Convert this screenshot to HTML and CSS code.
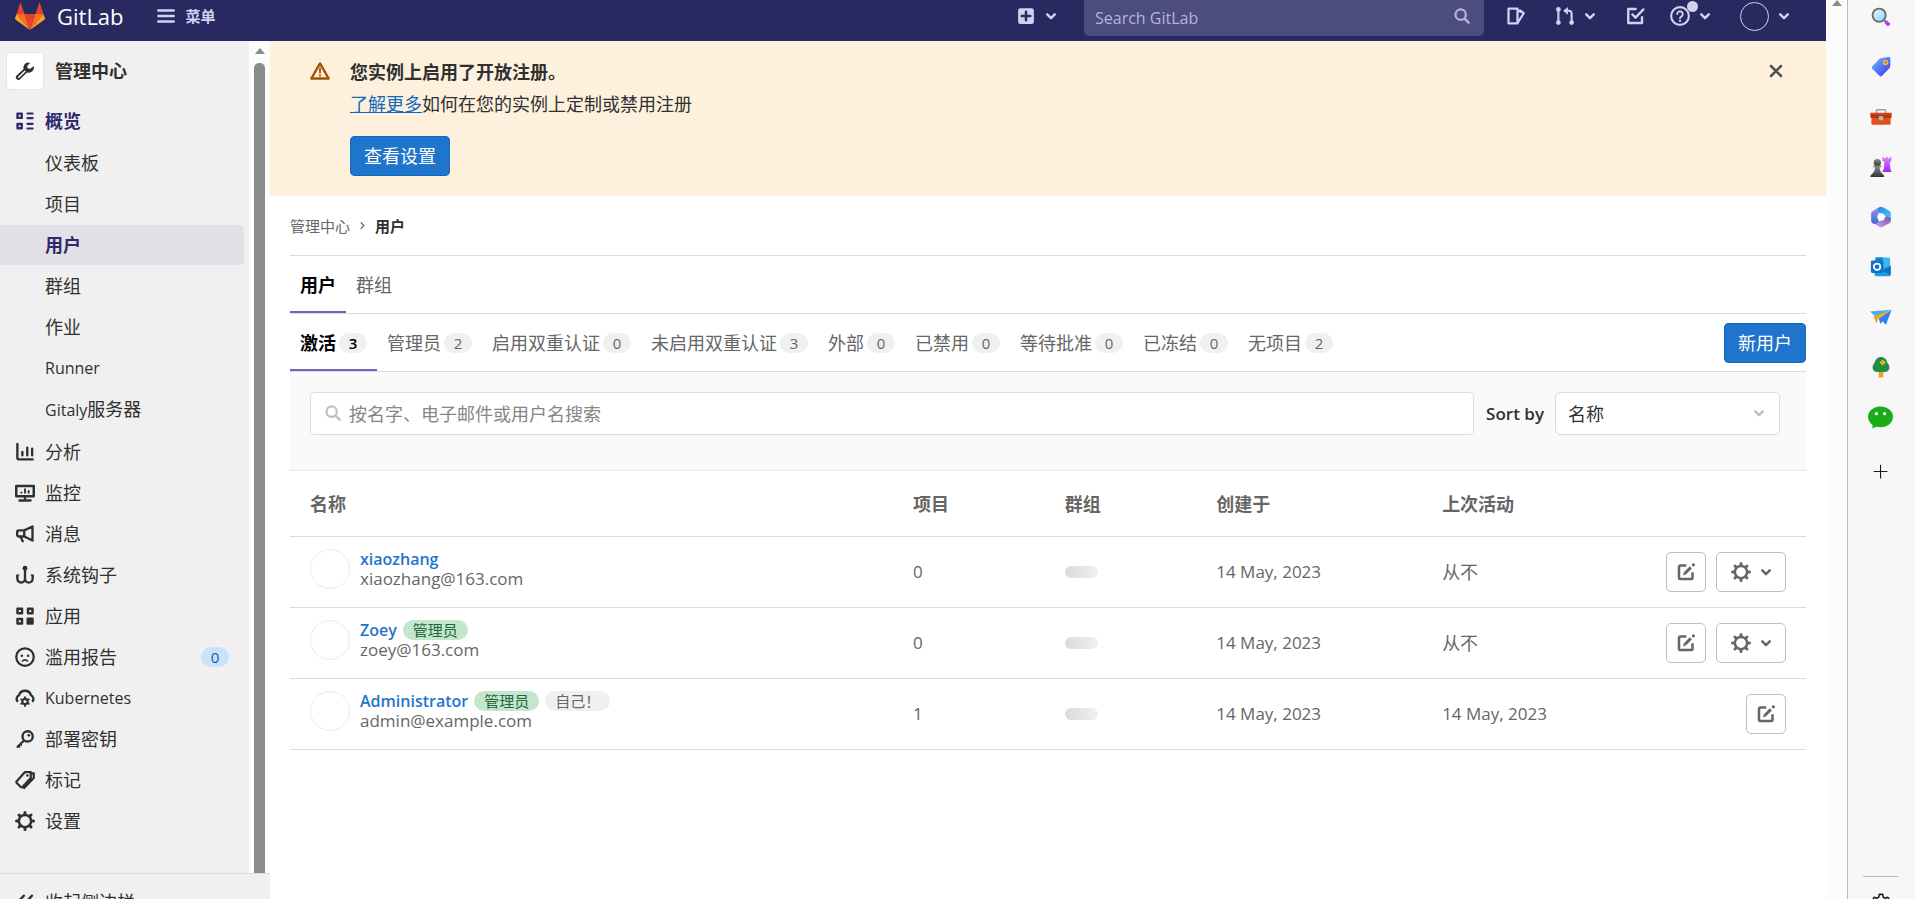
FILE: index.html
```html
<!DOCTYPE html>
<html lang="zh-CN">
<head>
<meta charset="utf-8">
<title>用户 · 管理中心 · GitLab</title>
<link rel="stylesheet" href="styles.css">
</head>
<body>
<svg class="defs" aria-hidden="true">
  <defs>
    <symbol id="i-chevron" viewBox="0 0 16 16"><path d="M5 6.7l3 3 3-3" fill="none" stroke="currentColor" stroke-width="2" stroke-linecap="round" stroke-linejoin="round"/></symbol>
    <symbol id="i-chevron-right" viewBox="0 0 16 16"><path d="M6.2 4.5L9.7 8l-3.5 3.5" fill="none" stroke="currentColor" stroke-width="1.6" stroke-linecap="round" stroke-linejoin="round"/></symbol>
    <symbol id="i-search" viewBox="0 0 16 16"><circle cx="6.8" cy="6.8" r="4.6" fill="none" stroke="currentColor" stroke-width="2"/><path d="M10.3 10.3l3.6 3.6" stroke="currentColor" stroke-width="2.2" stroke-linecap="round"/></symbol>
    <symbol id="i-gear" viewBox="0 0 16 16"><circle cx="8" cy="8" r="4.9" fill="none" stroke="currentColor" stroke-width="2"/><path d="M8 1.2v1.4M8 13.4v1.4M1.2 8h1.4M13.4 8h1.4M3.2 3.2l1 1M11.8 11.8l1 1M3.2 12.8l1-1M11.8 4.2l1-1" stroke="currentColor" stroke-width="2.4" stroke-linecap="round"/></symbol>
    <symbol id="i-edit" viewBox="0 0 16 16"><path d="M8.2 2.8H3.4a1 1 0 0 0-1 1v8.8a1 1 0 0 0 1 1h8.8a1 1 0 0 0 1-1V8.2" fill="none" stroke="currentColor" stroke-width="2"/><path d="M7 9.2l4.9-4.9" stroke="currentColor" stroke-width="2.4"/><path d="M5.6 10.6l.5-2.2 1.7 1.7z" fill="currentColor"/><circle cx="13.9" cy="2.2" r="1.3" fill="currentColor"/></symbol>
    <symbol id="i-wrench" viewBox="0 0 16 16"><path d="M10.2 1.2a4 4 0 0 0-3.3 5.1L1.3 11.6a1.9 1.9 0 0 0 2.8 2.9l5.5-5.4A4.1 4.1 0 0 0 14.9 4l-2.6 2.2-2-.3-.6-2 2.4-2.4a4 4 0 0 0-1.9-.3z" fill="#303030"/><path d="M3 13l4.900-4.800" stroke="#fff" stroke-width="1.200" stroke-linecap="round"/></symbol>
    <symbol id="i-overview" viewBox="0 0 16 16"><path d="M2 2.100h3.400v3.400H2zM2 10.400h3.400v3.400H2z" fill="none" stroke="currentColor" stroke-width="1.900" stroke-linejoin="round"/><path d="M10 2h4.100M10 5.700h4.100M10 10.300h4.100M10 14h4.100" stroke="currentColor" stroke-width="1.700" stroke-linecap="round"/></symbol>
    <symbol id="i-chart" viewBox="0 0 16 16"><path d="M1.900 1.600v11.300a1 1 0 0 0 1 1h11.200M5.900 8v2.600M9.800 4.600v6M13.700 5.400v5.200" fill="none" stroke="currentColor" stroke-width="1.900" stroke-linecap="round"/></symbol>
    <symbol id="i-monitor" viewBox="0 0 16 16"><path d="M1 2.400h14v8.200H1z" fill="none" stroke="currentColor" stroke-width="2" stroke-linejoin="round"/><path d="M8 11v2.600M3.600 14h8.800" stroke="currentColor" stroke-width="1.900" stroke-linecap="round"/><path d="M5.100 7.500v.3M8 5v2.800M10.900 6.300v1.500" stroke="currentColor" stroke-width="1.500" stroke-linecap="round"/></symbol>
    <symbol id="i-horn" viewBox="0 0 16 16"><path d="M7.400 5.100L14 2v11.200L7.400 10H3.200a1.500 1.500 0 0 1-1.500-1.500V6.600a1.500 1.500 0 0 1 1.500-1.500zM7.400 5.100V10M4.300 10l1.900 3.800" fill="none" stroke="currentColor" stroke-width="1.900" stroke-linejoin="round" stroke-linecap="round"/></symbol>
    <symbol id="i-hook" viewBox="0 0 16 16"><circle cx="8" cy="2.500" r="1.900" fill="currentColor"/><path d="M8 3v8.500M8 11a3 3 0 0 1-6.100 0V8.800M8 11a3 3 0 0 0 6.100 0V8.800" fill="none" stroke="currentColor" stroke-width="1.900" stroke-linecap="round"/><path d="M1 10.200V7.600h3zM15 10.200V7.600h-3z" fill="currentColor"/></symbol>
    <symbol id="i-apps" viewBox="0 0 16 16"><path d="M2 2.100h3.600v3.600H2zM10.400 2.100H14v3.600h-3.600zM2 10.400h3.600V14H2z" fill="none" stroke="currentColor" stroke-width="2" stroke-linejoin="round"/><rect x="9.200" y="9.200" width="5.800" height="5.800" rx="1" fill="currentColor"/></symbol>
    <symbol id="i-sad" viewBox="0 0 16 16"><circle cx="8" cy="8" r="7" fill="none" stroke="currentColor" stroke-width="1.800"/><circle cx="5.500" cy="7" r="1" fill="currentColor"/><circle cx="10.500" cy="7" r="1" fill="currentColor"/><path d="M6 11.300c.8-1.300 3.200-1.300 4 0" fill="none" stroke="currentColor" stroke-width="1.300" stroke-linecap="round"/></symbol>
    <symbol id="i-cloud" viewBox="0 0 16 16"><path d="M1.800 10.400A3.200 3.200 0 0 1 3.200 5.800a5 5 0 0 1 9.600 0 3.200 3.200 0 0 1 1.400 4.600" fill="none" stroke="currentColor" stroke-width="1.900" stroke-linecap="round"/><circle cx="8" cy="10.800" r="2.100" fill="none" stroke="currentColor" stroke-width="1.700"/><path d="M8 7.400v1M8 13.400v1M4.900 9.100l.9.500M10.200 12.100l.9.500M4.900 12.600l.9-.5M10.200 9.600l.9-.5" stroke="currentColor" stroke-width="1.500" stroke-linecap="round"/></symbol>
    <symbol id="i-key" viewBox="0 0 16 16"><circle cx="10.100" cy="5.900" r="4.100" fill="none" stroke="currentColor" stroke-width="1.900"/><circle cx="11" cy="5" r="1.100" fill="currentColor"/><path d="M7 8.200l-5.800 5.600V15h2.900v-1.600h1.500v-1.700l2.600-2z" fill="currentColor"/></symbol>
    <symbol id="i-tag" viewBox="0 0 16 16"><path d="M1.400 9L8 1.600h4.600v4.800L6 13.600a1 1 0 0 1-1.400 0L1.400 10.400a1 1 0 0 1 0-1.400zM6.700 15l8.300-8.600V2.600h-2" fill="none" stroke="currentColor" stroke-width="1.800" stroke-linejoin="round"/><circle cx="9.900" cy="4.400" r="1" fill="currentColor"/></symbol>
    <symbol id="i-collapse" viewBox="0 0 16 16"><path d="M7 3L2.500 8 7 13M13.500 3L9 8l4.500 5" fill="none" stroke="currentColor" stroke-width="2" stroke-linecap="round"/></symbol>
    <symbol id="i-warning" viewBox="0 0 16 16"><path d="M8 1.900L14.900 14H1.100z" fill="none" stroke="currentColor" stroke-width="1.900" stroke-linejoin="round"/><path d="M8 6v3.200" stroke="currentColor" stroke-width="1.500" stroke-linecap="round"/><circle cx="8" cy="11.500" r=".9" fill="currentColor"/></symbol>
    <symbol id="i-close" viewBox="0 0 16 16"><path d="M4 4l8 8M12 4l-8 8" stroke="currentColor" stroke-width="2" stroke-linecap="round"/></symbol>
  </defs>
</svg>

<div class="window">
  <div class="page">
    <header class="topbar">
      <a class="brand" href="#">
        <svg class="tanuki" viewBox="0 0 30 28" aria-hidden="true">
          <path d="M5.500 0L1.600 12h7.900zM24.500 0L20.500 12h7.900zM9.500 12h11L15 28z" fill="#e24329"/>
          <path d="M1.600 12h7.900L15 28zM28.400 12h-7.900L15 28z" fill="#fc6d26"/>
          <path d="M1.600 12L0 16.200q-.2 1 .7 1.600L15 28zM28.400 12l1.600 4.200q.2 1-.7 1.600L15 28z" fill="#fca326"/>
        </svg>
        <span class="wordmark">GitLab</span>
      </a>
      <button class="bar-btn menu-btn" type="button">
        <svg class="ico" viewBox="0 0 16 16" aria-hidden="true"><path d="M1.800 3.600h12.400M1.800 8h12.400M1.800 12.400h12.400" stroke="currentColor" stroke-width="1.900" stroke-linecap="round"/></svg>
        菜单
      </button>
      <button class="bar-btn new-btn" type="button" aria-label="新建">
        <svg class="ico" viewBox="0 0 16 16" aria-hidden="true"><rect x="1.700" y="1.700" width="12.600" height="12.600" rx="1.800" fill="currentColor"/><path d="M8 4.600v6.800M4.600 8h6.800" stroke="#292961" stroke-width="2" stroke-linecap="round"/></svg>
        <svg class="ico" aria-hidden="true"><use href="#i-chevron"/></svg>
      </button>
      <label class="top-search">
        <input type="search" placeholder="Search GitLab" aria-label="Search GitLab">
        <svg class="ico" aria-hidden="true"><use href="#i-search"/></svg>
      </label>
      <nav class="bar-links">
        <a class="bar-btn issues-btn" href="#" aria-label="议题"><svg class="ico" viewBox="0 0 16 16" aria-hidden="true"><path d="M2 2.100h7.200v11.800H2zM9.200 3.200l2.400 1.400M9.500 13.200l4.700-7.400-3-2.300" fill="none" stroke="currentColor" stroke-width="1.800" stroke-linejoin="round" stroke-linecap="round"/></svg></a>
        <button class="bar-btn" type="button" aria-label="合并请求"><svg class="ico" viewBox="0 0 16 16" aria-hidden="true"><path d="M2.700 3v10M7.500 3.800h3.400a2.400 2.400 0 0 1 2.400 2.400V13" fill="none" stroke="currentColor" stroke-width="1.700"/><circle cx="2.700" cy="2.700" r="1.900" fill="currentColor"/><circle cx="2.700" cy="13.200" r="1.900" fill="currentColor"/><circle cx="13.300" cy="13.200" r="1.900" fill="currentColor"/><path d="M10.300.7v6.200L6.600 3.800z" fill="currentColor"/></svg><svg class="ico" aria-hidden="true"><use href="#i-chevron"/></svg></button>
        <a class="bar-btn" href="#" aria-label="待办事项"><svg class="ico" viewBox="0 0 16 16" aria-hidden="true"><path d="M8.500 2.400H2.600v11.200h11V9" fill="none" stroke="currentColor" stroke-width="1.900" stroke-linejoin="round" stroke-linecap="round"/><path d="M6 6.800l2.400 2.500 6.200-6.500" fill="none" stroke="currentColor" stroke-width="2" stroke-linejoin="round" stroke-linecap="round"/></svg></a>
        <button class="bar-btn help-btn" type="button" aria-label="帮助"><svg class="ico" viewBox="0 0 16 16" aria-hidden="true"><circle cx="8" cy="8" r="7.100" fill="none" stroke="currentColor" stroke-width="1.700"/><path d="M5.800 6.500a2.200 2.200 0 1 1 3.400 1.800C8.400 8.800 8 9 8 9.800" fill="none" stroke="currentColor" stroke-width="1.500" stroke-linecap="round"/><circle cx="8" cy="11.900" r=".9" fill="currentColor"/></svg><svg class="ico" aria-hidden="true"><use href="#i-chevron"/></svg><span class="help-dot"></span></button>
        <button class="bar-btn" type="button" aria-label="用户菜单"><span class="top-avatar"></span><svg class="ico" aria-hidden="true"><use href="#i-chevron"/></svg></button>
      </nav>
    </header>

    <div class="body">
      <aside class="sidebar">
        <div class="side-scroll">
          <nav class="side-nav" aria-label="管理中心">
            <a class="side-title" href="#"><span class="side-badge"><svg class="ico" aria-hidden="true"><use href="#i-wrench"/></svg></span>管理中心</a>
            <ul class="side-list">
              <li><a class="side-link current" href="#"><svg class="ico" aria-hidden="true"><use href="#i-overview"/></svg>概览</a>
                <ul class="side-sub">
                  <li><a class="side-link" href="#">仪表板</a></li>
                  <li><a class="side-link" href="#">项目</a></li>
                  <li><a class="side-link current selected" href="#">用户</a></li>
                  <li><a class="side-link" href="#">群组</a></li>
                  <li><a class="side-link" href="#">作业</a></li>
                  <li><a class="side-link latin" href="#">Runner</a></li>
                  <li><a class="side-link" href="#"><span><span class="latin">Gitaly</span>服务器</span></a></li>
                </ul>
              </li>
              <li><a class="side-link" href="#"><svg class="ico" aria-hidden="true"><use href="#i-chart"/></svg>分析</a></li>
              <li><a class="side-link" href="#"><svg class="ico" aria-hidden="true"><use href="#i-monitor"/></svg>监控</a></li>
              <li><a class="side-link" href="#"><svg class="ico" aria-hidden="true"><use href="#i-horn"/></svg>消息</a></li>
              <li><a class="side-link" href="#"><svg class="ico" aria-hidden="true"><use href="#i-hook"/></svg>系统钩子</a></li>
              <li><a class="side-link" href="#"><svg class="ico" aria-hidden="true"><use href="#i-apps"/></svg>应用</a></li>
              <li><a class="side-link" href="#"><svg class="ico" aria-hidden="true"><use href="#i-sad"/></svg>滥用报告<span class="badge info">0</span></a></li>
              <li><a class="side-link latin" href="#"><svg class="ico" aria-hidden="true"><use href="#i-cloud"/></svg>Kubernetes</a></li>
              <li><a class="side-link" href="#"><svg class="ico" aria-hidden="true"><use href="#i-key"/></svg>部署密钥</a></li>
              <li><a class="side-link" href="#"><svg class="ico" aria-hidden="true"><use href="#i-tag"/></svg>标记</a></li>
              <li><a class="side-link" href="#"><svg class="ico" aria-hidden="true"><use href="#i-gear"/></svg>设置</a></li>
            </ul>
          </nav>
          <div class="scrollbar side-bar"><span class="arrow-up"></span><span class="thumb"></span></div>
        </div>
        <div class="side-foot"><button class="collapse" type="button"><svg class="ico" aria-hidden="true"><use href="#i-collapse"/></svg>收起侧边栏</button></div>
      </aside>

      <main class="main">
        <section class="banner">
          <svg class="ico banner-ico" aria-hidden="true"><use href="#i-warning"/></svg>
          <div class="banner-body">
            <h2>您实例上启用了开放注册。</h2>
            <p><a href="#">了解更多</a>如何在您的实例上定制或禁用注册</p>
            <button class="btn primary" type="button">查看设置</button>
          </div>
          <button class="close" type="button" aria-label="关闭"><svg class="ico" aria-hidden="true"><use href="#i-close"/></svg></button>
        </section>

        <div class="content">
          <nav class="crumbs" aria-label="面包屑"><a href="#">管理中心</a><svg class="sep" aria-hidden="true"><use href="#i-chevron-right"/></svg><a class="here" href="#">用户</a></nav>
          <nav class="tabs"><a class="tab active" href="#">用户</a><a class="tab" href="#">群组</a></nav>
          <div class="tabs">
            <a class="tab active" href="#">激活<span class="badge">3</span></a>
            <a class="tab" href="#">管理员<span class="badge">2</span></a>
            <a class="tab" href="#">启用双重认证<span class="badge">0</span></a>
            <a class="tab" href="#">未启用双重认证<span class="badge">3</span></a>
            <a class="tab" href="#">外部<span class="badge">0</span></a>
            <a class="tab" href="#">已禁用<span class="badge">0</span></a>
            <a class="tab" href="#">等待批准<span class="badge">0</span></a>
            <a class="tab" href="#">已冻结<span class="badge">0</span></a>
            <a class="tab" href="#">无项目<span class="badge">2</span></a>
            <button class="btn primary new-user" type="button">新用户</button>
          </div>

          <form class="filter">
            <label class="filter-search"><svg class="ico" aria-hidden="true"><use href="#i-search"/></svg><input type="search" placeholder="按名字、电子邮件或用户名搜索" aria-label="搜索用户"></label>
            <label class="sort-label" for="sort">Sort by</label>
            <span class="select"><select id="sort"><option>名称</option></select><svg class="ico" aria-hidden="true"><use href="#i-chevron"/></svg></span>
          </form>

          <table class="users">
            <colgroup><col><col class="c-num"><col class="c-num"><col class="c-date"><col class="c-date"><col class="c-act"></colgroup>
            <thead><tr><th>名称</th><th>项目</th><th>群组</th><th>创建于</th><th>上次活动</th><th></th></tr></thead>
            <tbody>
              <tr>
                <td><div class="user"><span class="avatar"></span><div><div class="name"><a href="#">xiaozhang</a></div><div class="mail">xiaozhang@163.com</div></div></div></td>
                <td>0</td><td><span class="skeleton"></span></td><td>14 May, 2023</td><td class="cjk">从不</td>
                <td><div class="actions"><button class="icon-btn" type="button" aria-label="编辑"><svg class="ico" aria-hidden="true"><use href="#i-edit"/></svg></button><button class="icon-btn wide" type="button" aria-label="用户管理"><svg class="ico" aria-hidden="true"><use href="#i-gear"/></svg><svg class="ico" aria-hidden="true"><use href="#i-chevron"/></svg></button></div></td>
              </tr>
              <tr>
                <td><div class="user"><span class="avatar"></span><div><div class="name"><a href="#">Zoey</a><span class="badge success">管理员</span></div><div class="mail">zoey@163.com</div></div></div></td>
                <td>0</td><td><span class="skeleton"></span></td><td>14 May, 2023</td><td class="cjk">从不</td>
                <td><div class="actions"><button class="icon-btn" type="button" aria-label="编辑"><svg class="ico" aria-hidden="true"><use href="#i-edit"/></svg></button><button class="icon-btn wide" type="button" aria-label="用户管理"><svg class="ico" aria-hidden="true"><use href="#i-gear"/></svg><svg class="ico" aria-hidden="true"><use href="#i-chevron"/></svg></button></div></td>
              </tr>
              <tr>
                <td><div class="user"><span class="avatar"></span><div><div class="name"><a href="#">Administrator</a><span class="badge success">管理员</span><span class="badge">自己！</span></div><div class="mail">admin@example.com</div></div></div></td>
                <td>1</td><td><span class="skeleton"></span></td><td>14 May, 2023</td><td>14 May, 2023</td>
                <td><div class="actions"><button class="icon-btn" type="button" aria-label="编辑"><svg class="ico" aria-hidden="true"><use href="#i-edit"/></svg></button></div></td>
              </tr>
            </tbody>
          </table>
        </div>
      </main>
    </div>
  </div>

  <div class="scrollbar page-bar"><span class="arrow-up"></span></div>

  <aside class="dock" aria-label="浏览器侧栏">
    <svg class="app" viewBox="0 0 24 24" aria-hidden="true"><defs><linearGradient id="g1" x1="0" y1="0" x2="1" y2="1"><stop offset="0" stop-color="#e8f8ff"/><stop offset="1" stop-color="#8fd0f5"/></linearGradient></defs><path d="M15.500 15.500l2 2" stroke="#666" stroke-width="2"/><path d="M17 17l4 4" stroke="#c239f5" stroke-width="4"/><circle cx="10" cy="10" r="7.200" fill="url(#g1)" stroke="#6b6b6b" stroke-width="2"/></svg>
    <svg class="app" viewBox="0 0 24 24" aria-hidden="true"><defs><linearGradient id="g2" x1="0" y1="0" x2="1" y2="1"><stop offset="0" stop-color="#6cbcff"/><stop offset="1" stop-color="#3a35f2"/></linearGradient></defs><path d="M12 2.500l8-1.300a2 2 0 0 1 2.300 2L22 11.500a3 3 0 0 1-.8 1.800l-8 8.200a2 2 0 0 1-2.900 0L2.500 14a2 2 0 0 1 0-2.900l7.700-7.700a3 3 0 0 1 1.800-.9z" fill="url(#g2)"/><circle cx="17" cy="7" r="2.200" fill="#8a7bd8" stroke="#ffc20e" stroke-width="1.500"/></svg>
    <svg class="app" viewBox="0 0 24 24" aria-hidden="true"><path d="M7 8V5.500A1.500 1.500 0 0 1 8.500 4h7A1.500 1.500 0 0 1 17 5.500V8" fill="none" stroke="#9a9a9a" stroke-width="1.600"/><rect x="1.500" y="11" width="21" height="9.500" rx="1.500" fill="#e0511c"/><path d="M.5 7.500h23V13H.5z" fill="#b8330e"/><path d="M.5 7.500h23v1.800H.5z" fill="#d5481b"/><rect x="9.700" y="10.800" width="4.600" height="4.800" rx="1" fill="#a9b7c4"/></svg>
    <svg class="app" viewBox="0 0 24 24" aria-hidden="true"><defs><linearGradient id="g3" x1="0" y1="0" x2="0" y2="1"><stop offset="0" stop-color="#8d8d8d"/><stop offset="1" stop-color="#333"/></linearGradient><linearGradient id="g4" x1="0" y1="0" x2="0" y2="1"><stop offset="0" stop-color="#d88bff"/><stop offset="1" stop-color="#a31dfa"/></linearGradient></defs><path d="M13.500 1h2v1.500h2V1h2v1.500h2V1h2v4l-2 2 .8 7.500 1.200 3H13.500l1.500-3 .8-7.500-2.300-2z" fill="url(#g4)"/><circle cx="8" cy="7.300" r="4" fill="url(#g3)"/><path d="M3.500 10.500h9v1.800h-2c0 3 1 5.200 3.200 7.200 1.500 1 1.800 1.800 1.800 3.500H.5c0-1.700.3-2.500 1.800-3.500 2.200-2 3.200-4.200 3.200-7.200h-2z" fill="url(#g3)"/></svg>
    <svg class="app" viewBox="0 0 24 24" aria-hidden="true"><defs><linearGradient id="g5" x1="0" y1="0" x2="0" y2="1"><stop offset="0" stop-color="#a58ae6"/><stop offset="1" stop-color="#2f6fd6"/></linearGradient><linearGradient id="g6" x1="0" y1="0" x2="1" y2="1"><stop offset="0" stop-color="#2b7fe0"/><stop offset="1" stop-color="#45d0f2"/></linearGradient><linearGradient id="g7" x1="0" y1="1" x2="1" y2="0"><stop offset="0" stop-color="#d39af0"/><stop offset="1" stop-color="#7457a8"/></linearGradient></defs><path d="M8 2.500L3 5.500A3.500 3.500 0 0 0 1.200 8.500v7.500A3.500 3.500 0 0 0 3 19l3 1 3.500-2V7z" fill="url(#g5)"/><path d="M8 2.500l2-1.200a4 4 0 0 1 4 0l7 4a3.500 3.500 0 0 1 1.800 3v5L9 7z" fill="url(#g6)"/><path d="M22.800 13v2.500A3.500 3.500 0 0 1 21 18.700l-7 4a4 4 0 0 1-4 0l-4-2.700 12-9z" fill="url(#g7)"/><circle cx="12" cy="12" r="4" fill="#fff"/></svg>
    <svg class="app" viewBox="0 0 24 24" aria-hidden="true"><rect x="6" y="1.500" width="16" height="15" rx="1.500" fill="#35b9ef"/><path d="M6 1.500h8v6H6z" fill="#1487d4"/><path d="M22.500 10.500v10a1.500 1.500 0 0 1-1.500 1.500H6.500A1.500 1.500 0 0 1 5 20.500V13h9z" fill="#1b9be5"/><path d="M22.500 11v10L14 16z" fill="#0c6fb8"/><rect x="1" y="5" width="13.500" height="13.500" rx="1.500" fill="#0f70c9"/><circle cx="7.700" cy="11.700" r="3.500" fill="none" stroke="#fff" stroke-width="1.900"/></svg>
    <svg class="app" viewBox="0 0 24 24" aria-hidden="true"><path d="M0 6L23.500 4 6.500 12z" fill="#4aaef5"/><path d="M23.500 4L17.500 20.500l-4-4-2 3-2-6z" fill="#2c83ee"/><path d="M23.500 4L4 11.500l3 7.500 2-5.500z" fill="#f5a51d"/></svg>
    <svg class="app" viewBox="0 0 24 24" aria-hidden="true"><rect x="9.500" y="15" width="5" height="8.500" rx=".8" fill="#f3a01c"/><path d="M12 1c3.800 0 6.500 3 7 6.500 1.500 1.500 2.200 3.200 2.200 5 0 3-2.200 5-5.200 5H8c-3 0-5.200-2-5.200-5 0-1.800.7-3.500 2.200-5C5.500 4 8.200 1 12 1z" fill="#1f8f45"/><path d="M13.800 4l3.200 3.200-3.200 3.200-3.200-3.200z" fill="#ffc61a"/><circle cx="13.800" cy="7.200" r="1" fill="#d86b0a"/></svg>
    <svg class="app wide-app" viewBox="0 0 26 24" aria-hidden="true"><ellipse cx="13" cy="11.300" rx="13" ry="10.800" fill="#1aad19"/><path d="M5 18l-.5 5.500L11 20.500z" fill="#1aad19"/><circle cx="8.700" cy="8" r="1.700" fill="#fff"/><circle cx="17.300" cy="8" r="1.700" fill="#fff"/></svg>
    <svg class="app add" viewBox="0 0 24 24" aria-hidden="true"><path d="M11.500 4v15M4 11.500h15" stroke="#1b1b1b" stroke-width="1.200"/></svg>
    <div class="dock-foot"><svg class="app" viewBox="0 0 24 24" aria-hidden="true"><path d="M10.200 1.500h3.600l.6 3 2.200 1.200 2.900-1 1.800 3-2.300 2v2.600l2.300 2-1.800 3-2.900-1-2.200 1.200-.6 3h-3.600l-.6-3-2.200-1.200-2.900 1-1.800-3 2.300-2V9.700l-2.300-2 1.800-3 2.900 1 2.200-1.200z" fill="none" stroke="#1b1b1b" stroke-width="1.700" stroke-linejoin="round"/></svg></div>
  </aside>
</div>
</body>
</html>
```

FILE: styles.css
```css
* { box-sizing: border-box; }

body {
  margin: 0;
  overflow: hidden;
  background: #fff;
  color: #303030;
  font-family: "Open Sans", "Noto Sans CJK SC", sans-serif;
  font-size: 18px;
  line-height: 20px;
}

a { color: inherit; text-decoration: none; }
ul { list-style: none; margin: 0; padding: 0; }
button, input, select { font: inherit; color: inherit; margin: 0; }
button { cursor: pointer; border: 0; background: none; padding: 0; }
input::-webkit-search-cancel-button { display: none; }

.defs { position: absolute; width: 0; height: 0; }
.ico { width: 20px; height: 20px; flex: none; display: block; }
.latin { font-size: 16px; }

.window { display: flex; height: 100vh; }
.page { flex: 1; min-width: 0; display: flex; flex-direction: column; }
.body { flex: 1; min-height: 0; display: flex; }

/* top bar */
.topbar {
  display: flex;
  align-items: flex-start;
  flex: none;
  height: 41px;
  padding: 0 32px 0 15px;
  background: #292961;
  color: #d1d1f0;
}
.brand { display: flex; align-items: center; gap: 12px; height: 32px; color: #fff; }
.tanuki { width: 30px; height: 28px; }
.wordmark { font-size: 22px; line-height: 32px; }
.bar-btn { position: relative; display: flex; align-items: center; gap: 5px; height: 32px; color: #d1d1f0; }
.menu-btn { margin-left: 32px; gap: 10px; font-size: 15px; font-weight: 700; }
.new-btn { margin-left: auto; }
.top-search { position: relative; width: 400px; margin: 0 22px 0 23px; }
.top-search input {
  display: block;
  width: 100%;
  height: 36px;
  padding: 0 40px 0 11px;
  border: 0;
  border-radius: 0 0 5px 5px;
  background: #4c4c7d;
  font-size: 16px;
  outline: 0;
}
.top-search input::placeholder { color: #b4b4dc; opacity: 1; }
.top-search .ico { position: absolute; right: 13px; top: 7px; width: 18px; height: 18px; color: #b4b4dc; }
.bar-links { display: flex; gap: 25px; }
.issues-btn { margin-right: 4px; }
.help-dot { position: absolute; left: 17px; top: 1px; width: 11px; height: 11px; border-radius: 50%; background: #d1d1f0; }
.top-avatar { width: 29px; height: 29px; border: 1px solid #d1d1f0; border-radius: 50%; }

/* scrollbars */
.scrollbar { width: 21px; flex: none; display: flex; flex-direction: column; align-items: center; background: #fcfcfc; }
.arrow-up { border: 5px solid transparent; border-top: 0; border-bottom: 6px solid #8b8b8b; }
.side-bar { padding-top: 7px; gap: 9px; }
.thumb { flex: 1; width: 11px; border-radius: 5px 5px 0 0; background: #8b8b8b; }

/* side navigation */
.sidebar { width: 270px; flex: none; display: flex; flex-direction: column; background: #f0f0f0; }
.side-scroll { flex: 1; min-height: 0; display: flex; }
.side-nav { flex: 1; padding: 11px 5px 0 0; overflow: hidden; }
.side-title { display: flex; align-items: center; gap: 11px; height: 38px; margin: 0 0 11px 6px; font-weight: 700; }
.side-badge { display: grid; place-items: center; width: 38px; height: 38px; border: 1px solid #e6e6e6; border-radius: 5px; background: #fff; }
.side-list, .side-sub { display: flex; flex-direction: column; gap: 1px; }
.side-sub { padding: 2px 0; }
.side-sub .side-link { padding-left: 45px; }
.side-link { display: flex; align-items: center; gap: 10px; height: 40px; padding: 0 15px; border-radius: 0 5px 5px 0; }
.side-link .badge { margin-left: auto; }
.current { font-weight: 700; color: #2f2a6b; }
.selected { background: #e1e0e6; }
.side-foot { flex: none; height: 26px; padding: 18px 15px 0; border-top: 1px solid #dbdbdb; overflow: hidden; }
.collapse { display: flex; align-items: center; gap: 10px; }

/* badges and buttons */
.badge { min-width: 28px; height: 20px; padding: 0 9px; border-radius: 10px; background: #f0f0f0; font-size: 15px; font-weight: 400; text-align: center; }
.badge.info { background: #cbe2f9; color: #0b5cad; }
.badge.success { background: #c3e6cd; color: #24663b; }
.btn { height: 40px; padding: 0 14px; border-radius: 5px; }
.primary { background: #1f75cb; color: #fff; box-shadow: inset 0 0 0 1px #1068bf; }

/* banner */
.main { flex: 1; min-width: 0; overflow: hidden; }
.banner { display: flex; gap: 20px; padding: 20px 40px; background: #fdf1dd; }
.banner-ico { color: #9e5400; }
.banner-body { flex: 1; }
.banner h2 { margin: 0 0 10px; font-size: 18px; line-height: 22px; }
.banner p { margin: 0 0 21px; line-height: 22px; }
.banner p a { color: #1068bf; text-decoration: underline; }
.close { align-self: flex-start; color: #525252; }

/* content */
.content { padding: 0 20px; }
.crumbs { display: flex; align-items: center; height: 60px; border-bottom: 1px solid #dbdbdb; font-size: 15px; color: #666; }
.sep { width: 13px; height: 13px; margin: 0 6px; }
.crumbs .here { color: #303030; font-weight: 700; }

.tabs { display: flex; align-items: center; height: 58px; border-bottom: 1px solid #dbdbdb; color: #666; }
.tab { display: flex; align-items: center; gap: 3px; height: 57px; padding: 0 10px; }
.tab.active { color: #000; font-weight: 700; box-shadow: inset 0 -2px #6666c4; }
.tab.active .badge { font-weight: 600; }
.new-user { margin-left: auto; }

.filter { display: flex; align-items: center; padding: 20px 26px 35px 20px; border-bottom: 1px solid #e6e6e6; background: #fafafa; }
.filter-search { position: relative; flex: 1; }
.filter-search .ico { position: absolute; left: 14px; top: 12px; width: 18px; height: 18px; color: #bfbfbf; }
.filter-search input, .select select {
  display: block;
  width: 100%;
  height: 43px;
  border: 1px solid #dbdbdb;
  border-radius: 5px;
  background: #fff;
  outline: 0;
}
.filter-search input { padding: 0 12px 0 38px; }
.filter-search input::placeholder { color: #868686; opacity: 1; }
.sort-label { margin: 0 11px 0 12px; font-size: 17px; font-weight: 600; }
.select { position: relative; width: 225px; }
.select select { appearance: none; padding: 0 12px; }
.select .ico { position: absolute; right: 11px; top: 11px; color: #bfbfbf; pointer-events: none; }

/* users table */
.users { width: 100%; table-layout: fixed; border-collapse: separate; border-spacing: 0; color: #666; }
.c-num { width: 10%; }
.c-date { width: 14.9%; }
.c-act { width: 158px; }
.users th, .users td { padding: 0 0 0 20px; border-bottom: 1px solid #dbdbdb; text-align: left; }
.users th { height: 66px; font-weight: 700; }
.users td { height: 71px; font-size: 17px; }
.users td.cjk { font-size: 18px; }
.users td:first-child { padding-bottom: 6px; }
.users th:last-child, .users td:last-child { padding: 0 20px 0 0; }
.user { display: flex; gap: 10px; }
.avatar { width: 40px; height: 40px; flex: none; border: 1px solid #ebebeb; border-radius: 50%; }
.name { display: flex; gap: 6px; font-size: 16px; font-weight: 600; color: #1f75cb; }
.name .badge { padding: 0 10px; }
.name .badge:not(.success) { color: #666; }
.skeleton { display: block; width: 33px; height: 12px; border-radius: 6px; background: linear-gradient(90deg, #dbdbdb, #f0f0f0); }
.actions { display: flex; justify-content: flex-end; gap: 10px; }
.icon-btn { display: flex; align-items: center; justify-content: center; gap: 5px; width: 40px; height: 40px; border: 1px solid #bfbfbf; border-radius: 5px; background: #fff; color: #666; }
.icon-btn.wide { width: 70px; padding-left: 14px; justify-content: flex-start; }

/* browser dock */
.dock { width: 68px; flex: none; display: flex; flex-direction: column; align-items: center; gap: 28px; padding: 6px 2px 0 0; border-left: 1px solid #bbb; background: #f7f7f7; overflow: hidden; }
.app { width: 22px; height: 22px; flex: none; display: block; }
.wide-app { width: 25px; height: 23px; }
.add { margin-top: 4px; }
.dock-foot { width: 35px; margin-top: auto; padding-top: 16px; height: 23px; flex: none; border-top: 1px solid #bbb; display: flex; justify-content: center; }
```
